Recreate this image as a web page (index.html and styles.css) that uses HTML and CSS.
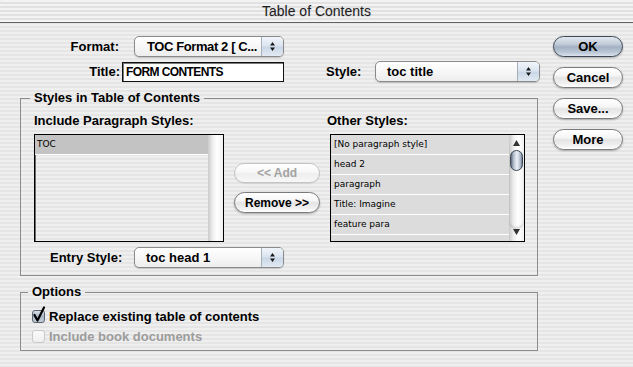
FILE: index.html
```html
<!DOCTYPE html>
<html>
<head>
<meta charset="utf-8">
<title>Table of Contents</title>
<link rel="stylesheet" href="styles.css">
</head>
<body>
<div class="window">
  <div class="titlebar">Table of Contents</div>
  <div class="dialog">
    <div class="main">
      <div class="row row-format">
        <span class="lbl lbl-w">Format:</span>
        <div class="popup popup-format">
          <span class="popup-text">TOC Format 2 [ C...</span>
          <span class="popup-arrows"><svg width="5" height="9" viewBox="0 0 5 9"><path d="M2.5 0 L5 3.5 L0 3.5 Z M0 5.5 L5 5.5 L2.5 9 Z" fill="#1a1a1a"/></svg></span>
        </div>
      </div>
      <div class="row row-title">
        <span class="lbl lbl-w lbl-title">Title:</span>
        <div class="textfield">FORM CONTENTS</div>
        <span class="lbl lbl-style">Style:</span>
        <div class="popup popup-style">
          <span class="popup-text">toc title</span>
          <span class="popup-arrows"><svg width="5" height="9" viewBox="0 0 5 9"><path d="M2.5 0 L5 3.5 L0 3.5 Z M0 5.5 L5 5.5 L2.5 9 Z" fill="#1a1a1a"/></svg></span>
        </div>
      </div>

      <fieldset class="group group-styles">
        <legend>Styles in Table of Contents</legend>
        <div class="styles-body">
          <div class="col-include">
            <div class="sublabel">Include Paragraph Styles:</div>
            <div class="list list-include">
              <div class="list-items">
                <div class="item item-selected">TOC</div>
              </div>
              <div class="scrollbar scrollbar-empty"></div>
            </div>
          </div>
          <div class="col-mid">
            <button class="btn btn-small btn-disabled">&lt;&lt; Add</button>
            <button class="btn btn-small btn-remove">Remove &gt;&gt;</button>
          </div>
          <div class="col-other">
            <div class="sublabel">Other Styles:</div>
            <div class="list list-other">
              <div class="list-items">
                <div class="item">[No paragraph style]</div>
                <div class="item">head 2</div>
                <div class="item">paragraph</div>
                <div class="item">Title: Imagine</div>
                <div class="item">feature para</div>
                <div class="item"></div>
              </div>
              <div class="scrollbar">
                <div class="sb-up"><svg width="7" height="6" viewBox="0 0 7 6"><path d="M3.5 0 L7 6 L0 6 Z" fill="#333"/></svg></div>
                <div class="sb-track"><div class="sb-thumb"></div></div>
                <div class="sb-down"><svg width="7" height="6" viewBox="0 0 7 6"><path d="M0 0 L7 0 L3.5 6 Z" fill="#333"/></svg></div>
              </div>
            </div>
          </div>
        </div>
        <div class="row row-entry">
          <span class="lbl lbl-entry">Entry Style:</span>
          <div class="popup popup-entry">
            <span class="popup-text">toc head 1</span>
            <span class="popup-arrows"><svg width="5" height="9" viewBox="0 0 5 9"><path d="M2.5 0 L5 3.5 L0 3.5 Z M0 5.5 L5 5.5 L2.5 9 Z" fill="#1a1a1a"/></svg></span>
          </div>
        </div>
      </fieldset>

      <fieldset class="group group-options">
        <legend>Options</legend>
        <div class="check">
          <span class="box box-checked"><svg width="14" height="17" viewBox="0 0 14 17"><path d="M2.5 9 L5.5 14.5 L12 1.5" fill="none" stroke="#000" stroke-width="2.2" stroke-linecap="round" stroke-linejoin="round"/></svg></span>
          <span>Replace existing table of contents</span>
        </div>
        <div class="check check-disabled">
          <span class="box"></span>
          <span>Include book documents</span>
        </div>
      </fieldset>
    </div>

    <div class="buttons">
      <button class="btn btn-default">OK</button>
      <button class="btn">Cancel</button>
      <button class="btn">Save...</button>
      <button class="btn">More</button>
    </div>
  </div>
</div>
</body>
</html>
```

FILE: styles.css
```css
html, body {
  margin: 0;
  padding: 0;
}

body {
  width: 633px;
  height: 367px;
  overflow: hidden;
  font-family: "Liberation Sans", Arial, sans-serif;
  font-size: 13px;
  color: #000;
  background: repeating-linear-gradient(to bottom, #efefef 0, #efefef 2px, #e5e5e5 2px, #e5e5e5 4px);
}

.window {
  width: 633px;
  height: 367px;
}

.titlebar {
  height: 22px;
  line-height: 22px;
  text-align: center;
  font-size: 14px;
  color: #1e1e1e;
  border-bottom: 1px solid #626262;
  border-radius: 5px 5px 0 0;
  background: repeating-linear-gradient(to bottom, #f3f3f3 0, #f3f3f3 2px, #e1e1e1 2px, #e1e1e1 4px);
  text-shadow: 0 1px 1px rgba(0, 0, 0, 0.12);
}

.dialog {
  display: flex;
  align-items: flex-start;
}

.main {
  width: 540px;
  flex: none;
}

.lbl {
  font-weight: bold;
  white-space: nowrap;
}

.row {
  display: flex;
  align-items: center;
}

.row-format {
  margin-top: 13px;
}

.lbl-w {
  width: 119px;
  text-align: right;
  flex: none;
}

.lbl-title {
  width: 120px;
}

.popup {
  display: flex;
  height: 21px;
  box-sizing: border-box;
  border: 1px solid #8a8a8a;
  border-radius: 5px;
  background: linear-gradient(to bottom, #ffffff 0%, #f7f7f7 50%, #ededed 100%);
  box-shadow: 0 1px 1px rgba(0, 0, 0, 0.18);
  overflow: hidden;
  font-weight: bold;
  flex: none;
}

.popup-text {
  flex: 1;
  padding-left: 11px;
  line-height: 19px;
  white-space: nowrap;
  overflow: hidden;
}

.popup-arrows {
  width: 21px;
  flex: none;
  border-left: 1px solid #a7afba;
  background: linear-gradient(to bottom, #f1f5fa 0%, #dae4ef 48%, #c8d6e6 52%, #e2eaf3 100%);
  display: flex;
  align-items: center;
  justify-content: center;
}

.popup-format {
  margin-left: 15px;
  width: 150px;
}

.popup-format .popup-text {
  padding-left: 12px;
  letter-spacing: -0.4px;
}

.row-title {
  margin-top: 4px;
  height: 21px;
}

.textfield {
  margin-left: 2px;
  width: 162px;
  height: 20px;
  box-sizing: border-box;
  border: 1px solid #111;
  box-shadow: inset 1px 1px 0 #7a7a7a;
  background: #fff;
  padding-left: 3px;
  line-height: 18px;
  font-weight: bold;
  font-size: 12px;
  letter-spacing: -0.6px;
  white-space: nowrap;
  flex: none;
}

.lbl-style {
  margin-left: 42px;
  width: 49px;
  flex: none;
}

.popup-style {
  width: 165px;
}

.group {
  margin: 8px 0 0 20px;
  width: 518px;
  box-sizing: border-box;
  border: 1px solid #8c8c8c;
  min-inline-size: 0;
}

.group legend {
  font-weight: bold;
  line-height: 16px;
  padding: 0 4px;
  margin-left: -4px;
}

.group-styles {
  padding: 7px 0 7px 13px;
}

.styles-body {
  display: flex;
  align-items: flex-start;
}

.sublabel {
  font-weight: bold;
  line-height: 16px;
  white-space: nowrap;
}

.list {
  display: flex;
  box-sizing: border-box;
  height: 108px;
  margin-top: 5px;
  border: 1px solid #000;
  box-shadow: inset 1px 1px 0 #6c6c6c;
}

.list-include {
  width: 190px;
}

.list-other {
  width: 195px;
  margin-left: 3px;
  background: #dcdcdc;
}

.list-items {
  flex: 1;
  overflow: hidden;
}

.item {
  height: 19px;
  line-height: 19px;
  border-bottom: 1px solid #fff;
  background: #dcdcdc;
  font-family: "DejaVu Sans", Verdana, sans-serif;
  font-size: 9px;
  padding-left: 3px;
  white-space: nowrap;
}

.item-selected {
  background: #c3c3c3;
  padding-left: 2px;
}

.scrollbar {
  width: 15px;
  flex: none;
  display: flex;
  flex-direction: column;
  background: linear-gradient(to right, #c9c9c9 0%, #ededed 30%, #ffffff 60%, #f0f0f0 100%);
}

.sb-up {
  height: 15px;
  display: flex;
  align-items: center;
  justify-content: center;
}

.sb-down {
  height: 12px;
  display: flex;
  align-items: flex-start;
  justify-content: center;
}

.sb-track {
  flex: 1;
  border-radius: 0 0 7px 7px;
  box-shadow: inset 0 -2px 2px rgba(0, 0, 0, 0.12);
}

.sb-thumb {
  height: 21px;
  margin: 0 1px;
  box-sizing: border-box;
  border: 1px solid #3e4654;
  border-radius: 7px;
  background: linear-gradient(to right, #5d6a7c 0%, #b6c2d1 25%, #eef2f7 55%, #aebbcc 85%, #6b788a 100%);
}

.col-mid {
  margin-left: 10px;
  padding-top: 50px;
  display: flex;
  flex-direction: column;
}

.col-other {
  margin-left: 7px;
}

.btn {
  display: block;
  box-sizing: border-box;
  width: 70px;
  height: 21px;
  padding: 0;
  border: 1px solid #7a7a7a;
  border-radius: 11px;
  font-family: "Liberation Sans", Arial, sans-serif;
  font-weight: bold;
  font-size: 13px;
  color: #000;
  background: linear-gradient(to bottom, #ffffff 0%, #f6f6f6 40%, #e4e4e4 52%, #f0f0f0 80%, #ffffff 100%);
  box-shadow: 0 1px 2px rgba(0, 0, 0, 0.28);
}

.btn-default {
  border-color: #3d4654;
  background: linear-gradient(to bottom, #e2e8ef 0%, #bfc9d6 40%, #a3b1c3 52%, #b9c6d5 80%, #dde5ee 100%);
}

.btn-small {
  width: 86px;
  height: 20px;
  font-size: 12px;
}

.btn-remove {
  margin-top: 9px;
  height: 21px;
}

.btn-disabled {
  color: #a3a3a3;
  border-color: #c4c4c4;
  box-shadow: 0 1px 1px rgba(0, 0, 0, 0.08);
  background: linear-gradient(to bottom, #ffffff 0%, #f7f7f7 45%, #eeeeee 55%, #f8f8f8 100%);
}

.row-entry {
  margin-top: 5px;
}

.lbl-entry {
  margin-left: 16px;
  width: 84px;
  flex: none;
}

.popup-entry {
  width: 150px;
}

.group-options {
  padding: 6px 0 4px 11px;
}

.check {
  display: flex;
  align-items: center;
  height: 20px;
  font-weight: bold;
  white-space: nowrap;
}

.box {
  position: relative;
  width: 13px;
  height: 13px;
  box-sizing: border-box;
  margin-right: 4px;
  border: 1px solid #7f7f7f;
  border-radius: 3px;
  background: linear-gradient(to bottom, #f4f4f4 0%, #dedede 50%, #eeeeee 100%);
  flex: none;
}

.box-checked {
  border-color: #5c6470;
  background: linear-gradient(to bottom, #d9e0e9 0%, #a9b5c4 50%, #c5cfdb 100%);
}

.box-checked svg {
  position: absolute;
  left: -1px;
  top: -5px;
}

.check-disabled {
  color: #9c9c9c;
}

.check-disabled .box {
  border-color: #c9c9c9;
  background: linear-gradient(to bottom, #fafafa 0%, #efefef 100%);
}

.buttons {
  display: flex;
  flex-direction: column;
  gap: 10px;
  margin: 13px 0 0 13px;
}
```
